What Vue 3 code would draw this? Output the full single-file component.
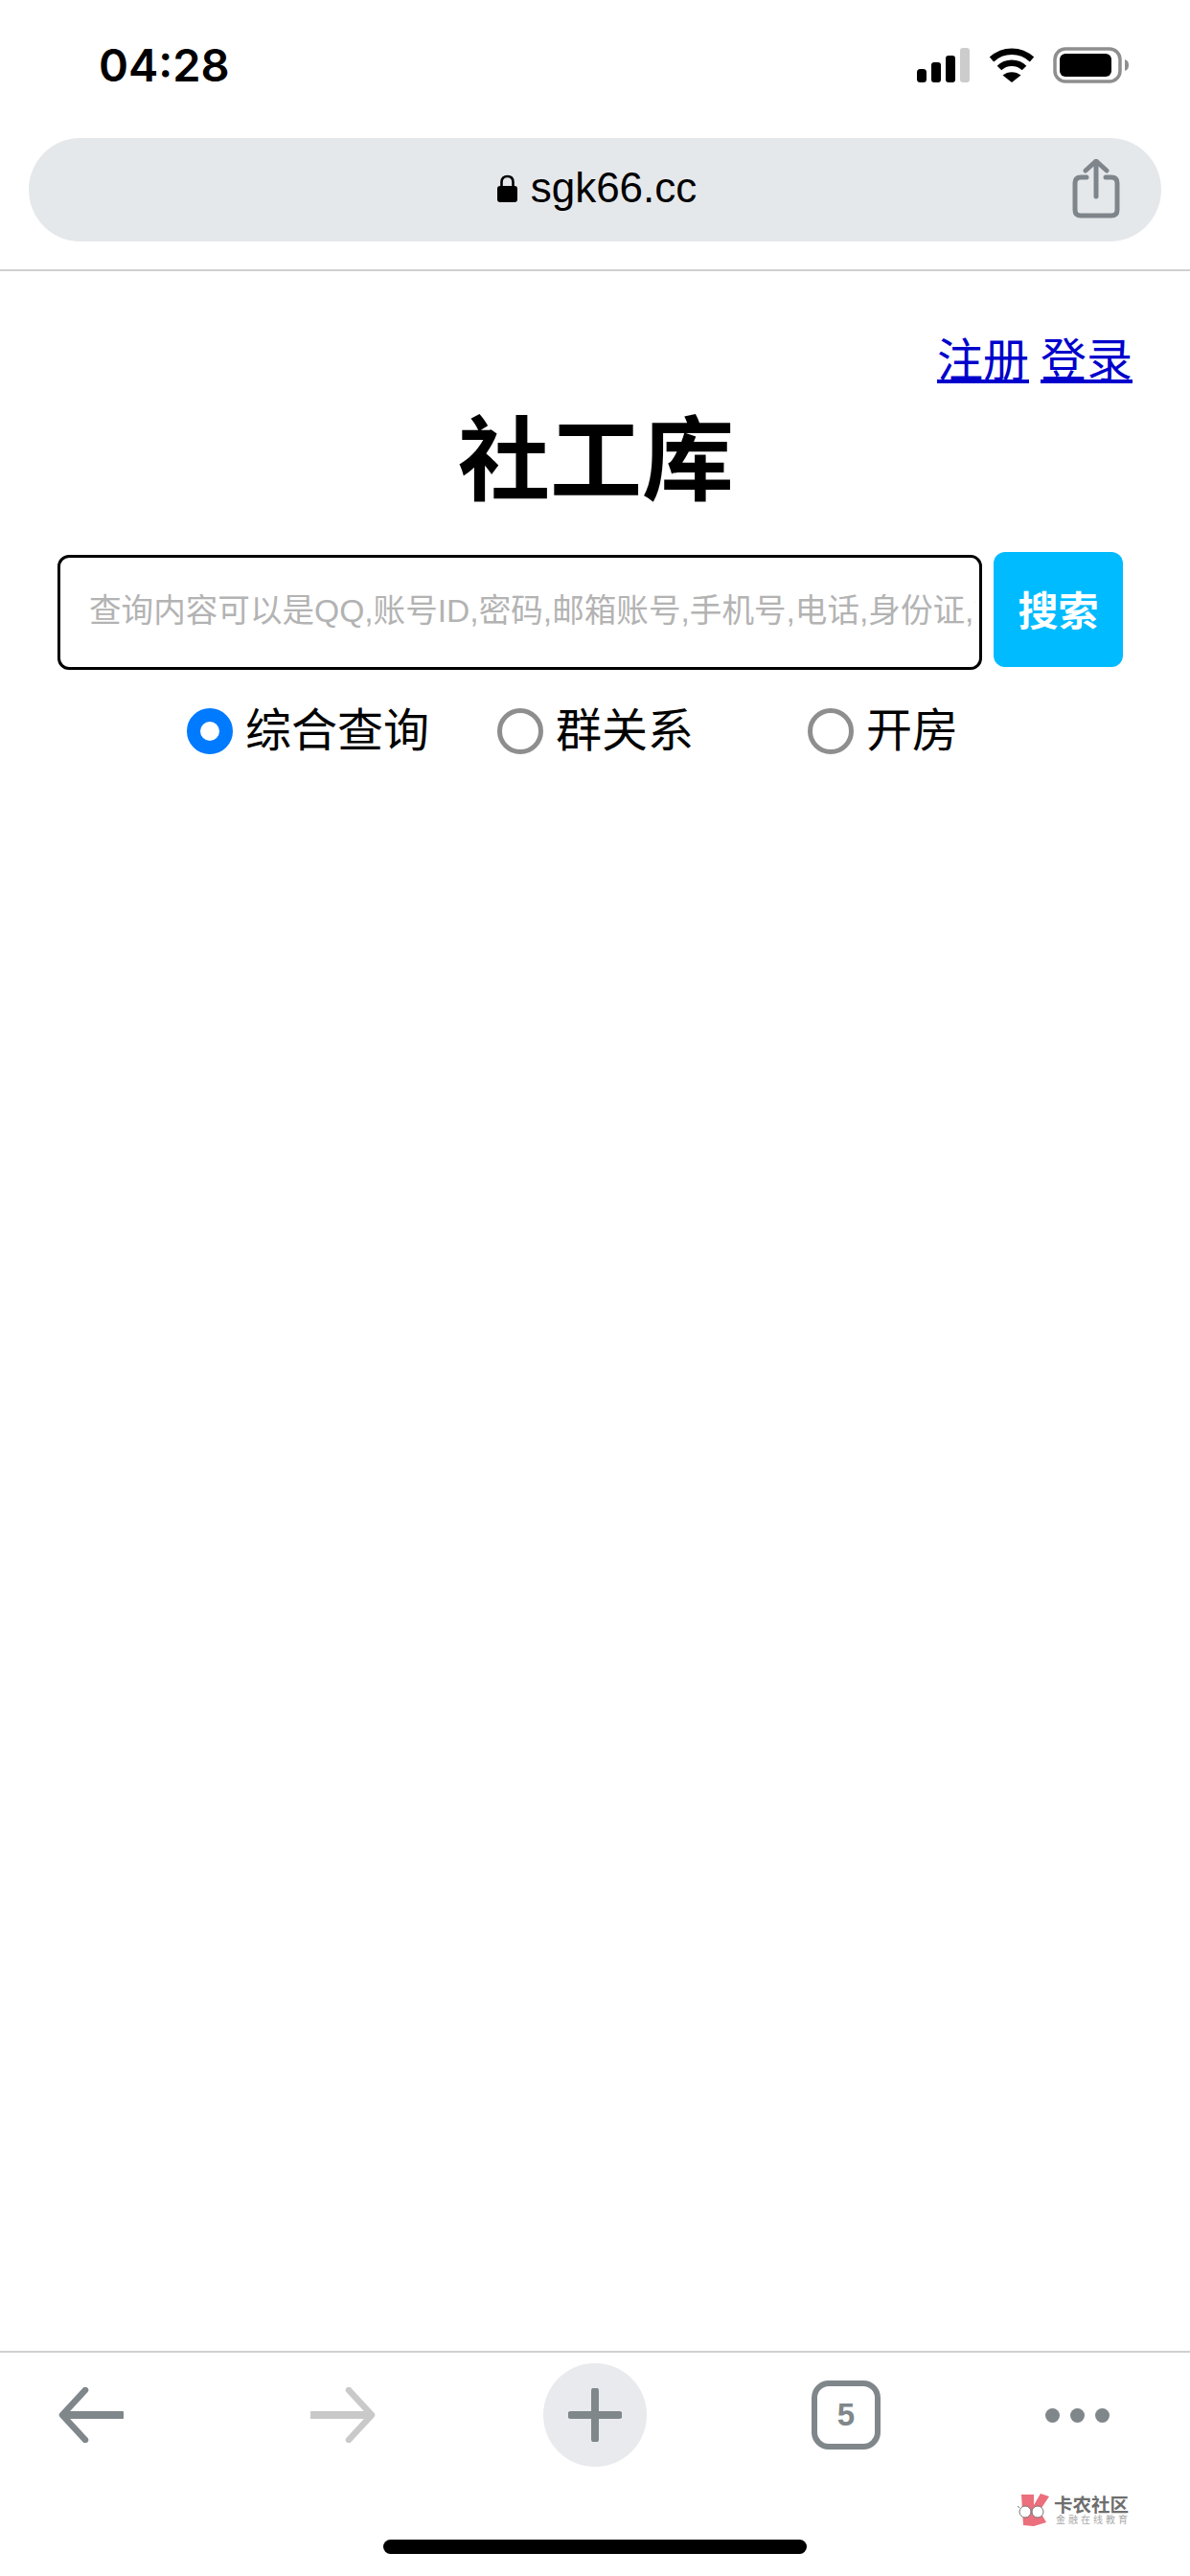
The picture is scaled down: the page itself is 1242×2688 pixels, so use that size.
<template>
  <div class="page">
    <header class="top">
      <div class="status">
        <span class="time">04:28</span>
        <div class="status-icons">
          <svg class="signal" width="55" height="36" viewBox="0 0 55 36">
            <rect x="0" y="22" width="10" height="14" rx="3.5" fill="#000" />
            <rect x="15" y="15" width="10" height="21" rx="3" fill="#000" />
            <rect x="30" y="8" width="10" height="28" rx="3" fill="#000" />
            <rect x="45" y="0" width="10" height="36" rx="3" fill="#ccc" />
          </svg>
          <svg class="wifi" width="48" height="37" viewBox="0 0 48 37">
            <path d="M3 13 C15 2 33 2 45 13" fill="none" stroke="#000" stroke-width="6.5" />
            <path d="M11 22 C18 15 30 15 37 22" fill="none" stroke="#000" stroke-width="6.5" />
            <path d="M14.5 29.5 C20 25 28 25 33.5 29.5 L24 37 Z" fill="#000" />
          </svg>
          <svg class="battery" width="80" height="38" viewBox="0 0 80 38">
            <rect x="2" y="2" width="68" height="34" rx="11" fill="none" stroke="#8e8e8e" stroke-width="3.5" />
            <rect x="7" y="7" width="54" height="24" rx="6" fill="#000" />
            <path d="M75 13 C78 14 79 16 79 19 C79 22 78 24 75 25 Z" fill="#8e8e8e" />
          </svg>
        </div>
      </div>
      <div class="address">
        <div class="address-spacer"></div>
        <div class="address-url">
          <svg width="21" height="29" viewBox="0 0 21 29">
            <path d="M4.5 13 V8 C4.5 4 7 2 10.5 2 C14 2 16.5 4 16.5 8 V13" fill="none" stroke="#000" stroke-width="2.6" />
            <rect x="0" y="12" width="21" height="17" rx="3" fill="#000" />
          </svg>
          <span class="address-text">sgk66.cc</span>
        </div>
        <svg class="share" width="50" height="62" viewBox="0 0 50 62">
          <path d="M15 19 H9 C5 19 3 21 3 25 V53 C3 57 5 59 9 59 H41 C45 59 47 57 47 53 V25 C47 21 45 19 41 19 H35" fill="none" stroke="#7f868b" stroke-width="5" stroke-linecap="round" />
          <path d="M25 39 V3 M14 12 L25 2 L36 12" fill="none" stroke="#7f868b" stroke-width="5" stroke-linecap="round" stroke-linejoin="round" />
        </svg>
      </div>
    </header>

    <main class="content">
      <div class="links">
        <a href="#">注册</a>
        <a href="#">登录</a>
      </div>
      <h1 class="title">社工库</h1>
      <div class="search">
        <input
          class="search-input"
          type="text"
          placeholder="查询内容可以是QQ,账号ID,密码,邮箱账号,手机号,电话,身份证,姓名等"
        />
        <button class="search-btn">搜索</button>
      </div>
      <div class="types">
        <label v-for="t in types" :key="t" class="type">
          <input v-model="selected" class="radio" type="radio" name="type" :value="t" />
          <span>{{ t }}</span>
        </label>
      </div>
    </main>

    <footer class="bottom">
      <nav class="toolbar">
        <svg class="tool" width="68" height="58" viewBox="0 0 68 58">
          <path d="M66 29 H6" fill="none" stroke="#80878b" stroke-width="8" stroke-linecap="round" />
          <path d="M28 3 L4 29 L28 55" fill="none" stroke="#80878b" stroke-width="6.5" stroke-linecap="round" stroke-linejoin="round" />
        </svg>
        <svg class="tool forward" width="68" height="58" viewBox="0 0 68 58">
          <path d="M2 29 H62" fill="none" stroke="#c9c9c9" stroke-width="8" stroke-linecap="round" />
          <path d="M40 3 L64 29 L40 55" fill="none" stroke="#c9c9c9" stroke-width="6.5" stroke-linecap="round" stroke-linejoin="round" />
        </svg>
        <div class="plus">
          <svg width="56" height="56" viewBox="0 0 56 56">
            <path d="M28 3 V53 M3 28 H53" fill="none" stroke="#80878b" stroke-width="8" stroke-linecap="round" />
          </svg>
        </div>
        <div class="tabs">5</div>
        <div class="more">
          <i></i><i></i><i></i>
        </div>
      </nav>
      <div class="home-bar"></div>
      <div class="watermark">
        <svg width="36" height="36" viewBox="0 0 36 36">
          <path d="M5 1 L18 1 L18 12 L25 0 L34 3 L24 18 L31 30 L18 34 L7 33 Z" fill="#eb6f7c" />
          <path d="M3 15 L1 13" stroke="#777" stroke-width="1" />
          <circle cx="9" cy="19" r="6" fill="#fff" stroke="#777" stroke-width="1" />
          <circle cx="22" cy="19" r="6" fill="#fff" stroke="#777" stroke-width="1" />
        </svg>
        <div class="watermark-text">
          <div class="watermark-name">卡农社区</div>
          <div class="watermark-sub">金融在线教育</div>
        </div>
      </div>
    </footer>
  </div>
</template>

<script setup>
import { ref } from "vue";

const types = ["综合查询", "群关系", "开房"];
const selected = ref("综合查询");
</script>

<style>
html,
body {
  margin: 0;
  background: #fff;
}
</style>

<style scoped>
.page {
  width: 1242px;
  height: 2688px;
  display: flex;
  flex-direction: column;
  font-family: "Liberation Sans", "Noto Sans CJK SC", sans-serif;
  color: #000;
  overflow: hidden;
}

.top {
  border-bottom: 2px solid #d0d0d0;
  padding-bottom: 29px;
}

.status {
  height: 144px;
  box-sizing: border-box;
  padding: 44px 63px 0 103px;
  display: flex;
  justify-content: space-between;
  align-items: flex-start;
}

.time {
  font-family: Inter, "Liberation Sans", sans-serif;
  font-size: 47px;
  font-weight: 600;
  line-height: 48px;
}

.status-icons {
  display: flex;
  align-items: flex-start;
  padding-top: 5px;
}

.signal {
  margin-top: 1px;
}

.wifi {
  margin-left: 20px;
}

.battery {
  margin-left: 19px;
}

.address {
  margin: 0 30px;
  height: 108px;
  border-radius: 54px;
  background: #e5e8eb;
  display: grid;
  grid-template-columns: 1fr auto 1fr;
  align-items: center;
}

.address-url {
  display: flex;
  align-items: center;
  gap: 14px;
  font-size: 44px;
  padding-left: 4px;
  margin-top: -4px;
}

.share {
  justify-self: end;
  margin-right: 43px;
  margin-top: -2px;
}

.content {
  flex: 1;
  padding: 67px 60px 0;
}

.links {
  display: flex;
  justify-content: flex-end;
  gap: 12px;
  font-size: 48px;
  line-height: 54px;
}

.links a {
  color: #0000cc;
}

.title {
  margin: 22px 0 0;
  text-align: center;
  font-size: 96px;
  font-weight: 700;
  line-height: 110px;
  padding-left: 2px;
}

.search {
  margin-top: 40px;
  display: flex;
  align-items: flex-start;
  gap: 12px;
}

.search-input {
  width: 965px;
  height: 120px;
  margin-top: 3px;
  box-sizing: border-box;
  border: 3px solid #000;
  border-radius: 12px;
  padding: 0 4px 2px 30px;
  font: 33.6px "Liberation Sans", "Noto Sans CJK SC", sans-serif;
  background: #fff;
  outline: none;
}

.search-input::placeholder {
  color: #b3b3b3;
  opacity: 1;
}

.search-btn {
  width: 135px;
  height: 120px;
  border: 0;
  border-radius: 12px;
  background: #00bbff;
  color: #fff;
  font: 700 42px "Liberation Sans", "Noto Sans CJK SC", sans-serif;
  padding: 0 0 4px;
}

.types {
  margin-top: 38px;
  padding-left: 135px;
  display: grid;
  grid-template-columns: repeat(3, 324px);
}

.type {
  display: flex;
  align-items: center;
  gap: 13px;
  font-size: 48px;
  line-height: 52px;
}

.radio {
  appearance: none;
  width: 48px;
  height: 48px;
  margin: 0;
  box-sizing: border-box;
  border: 5px solid #8e8e8e;
  border-radius: 50%;
  background: #fff;
}

.radio:checked {
  border: 14px solid #007aff;
}

.bottom {
  position: relative;
  height: 235px;
  border-top: 2px solid #d0d0d0;
  box-sizing: border-box;
}

.toolbar {
  height: 108px;
  margin-top: 11px;
  padding-left: 61px;
  display: flex;
  align-items: center;
  gap: 172px;
}

.tool {
  flex: none;
}

.forward {
  margin-left: 23px;
}

.plus {
  width: 108px;
  height: 108px;
  flex: none;
  margin-left: 3px;
  border-radius: 50%;
  background: #e9eaee;
  display: flex;
  align-items: center;
  justify-content: center;
}

.tabs {
  width: 72px;
  height: 72px;
  flex: none;
  box-sizing: border-box;
  border: 6px solid #80878b;
  border-radius: 18px;
  color: #80878b;
  font-size: 33px;
  font-weight: 700;
  display: flex;
  align-items: center;
  justify-content: center;
}

.more {
  display: flex;
  gap: 11px;
  flex: none;
}

.more i {
  width: 15px;
  height: 15px;
  border-radius: 50%;
  background: #80878b;
}

.home-bar {
  width: 442px;
  height: 15px;
  margin: 76px auto 0;
  border-radius: 8px;
  background: #000;
}

.watermark {
  position: absolute;
  left: 1061px;
  top: 147px;
  display: flex;
  gap: 3px;
  align-items: center;
}

.watermark-text {
  color: #6e6e6e;
  white-space: nowrap;
}

.watermark-name {
  font-size: 19.5px;
  line-height: 20px;
  font-weight: 700;
}

.watermark-sub {
  font-size: 10px;
  line-height: 12px;
  letter-spacing: 3px;
  color: #a8a8a8;
  padding-left: 2px;
}
</style>
